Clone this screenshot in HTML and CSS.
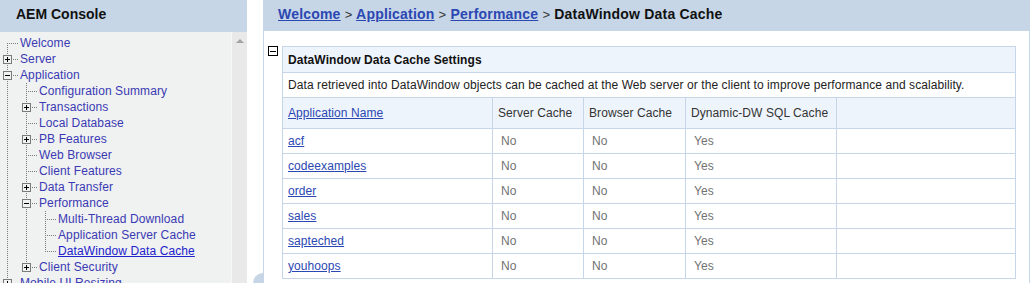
FILE: index.html
```html
<!DOCTYPE html>
<html lang="en">
<head>
    <meta charset="UTF-8">
    <title>AEM Console - DataWindow Data Cache</title>
    <link rel="stylesheet" href="styles.css">
</head>
<body>
    <div class="page">
        <aside class="nav">
            <div class="nav-head">AEM Console</div>
            <div class="nav-body">
                <div class="tree">
                    <div class="row"><span class="t first"></span><a class="lbl" href="#">Welcome</a></div>
                    <div class="row"><span class="t mid"><span class="box plus"></span></span><a class="lbl" href="#">Server</a></div>
                    <div class="row"><span class="t mid"><span class="box"></span></span><a class="lbl" href="#">Application</a></div>
                    <div class="row"><span class="g line"></span><span class="t mid"></span><a class="lbl" href="#">Configuration Summary</a></div>
                    <div class="row"><span class="g line"></span><span class="t mid"><span class="box plus"></span></span><a class="lbl" href="#">Transactions</a></div>
                    <div class="row"><span class="g line"></span><span class="t mid"></span><a class="lbl" href="#">Local Database</a></div>
                    <div class="row"><span class="g line"></span><span class="t mid"><span class="box plus"></span></span><a class="lbl" href="#">PB Features</a></div>
                    <div class="row"><span class="g line"></span><span class="t mid"></span><a class="lbl" href="#">Web Browser</a></div>
                    <div class="row"><span class="g line"></span><span class="t mid"></span><a class="lbl" href="#">Client Features</a></div>
                    <div class="row"><span class="g line"></span><span class="t mid"><span class="box plus"></span></span><a class="lbl" href="#">Data Transfer</a></div>
                    <div class="row"><span class="g line"></span><span class="t mid"><span class="box"></span></span><a class="lbl" href="#">Performance</a></div>
                    <div class="row"><span class="g line"></span><span class="g line"></span><span class="t mid"></span><a class="lbl" href="#">Multi-Thread Download</a></div>
                    <div class="row"><span class="g line"></span><span class="g line"></span><span class="t mid"></span><a class="lbl" href="#">Application Server Cache</a></div>
                    <div class="row"><span class="g line"></span><span class="g line"></span><span class="t last"></span><a class="lbl selected" href="#">DataWindow Data Cache</a></div>
                    <div class="row"><span class="g line"></span><span class="t last"><span class="box plus"></span></span><a class="lbl" href="#">Client Security</a></div>
                    <div class="row"><span class="t mid"><span class="box plus"></span></span><a class="lbl" href="#">Mobile UI Resizing</a></div>
                </div>
                <div class="scroll"><span class="arrow"></span></div>
            </div>
        </aside>

        <div class="split"><span class="grip"></span></div>

        <main class="content">
            <div class="crumbs">
                <a href="#">Welcome</a> <span class="sep">&gt;</span>
                <a href="#">Application</a> <span class="sep">&gt;</span>
                <a href="#">Performance</a> <span class="sep">&gt;</span>
                <span class="current">DataWindow Data Cache</span>
            </div>
            <div class="section">
                <span class="fold"></span>
                <table class="grid">
                    <colgroup>
                        <col class="c1"><col class="c2"><col class="c3"><col class="c4"><col class="c5">
                    </colgroup>
                    <tr class="title"><td colspan="5">DataWindow Data Cache Settings</td></tr>
                    <tr class="desc"><td colspan="5">Data retrieved into DataWindow objects can be cached at the Web server or the client to improve performance and scalability.</td></tr>
                    <tr class="head">
                        <td><a href="#">Application Name</a></td>
                        <td>Server Cache</td>
                        <td>Browser Cache</td>
                        <td>Dynamic-DW SQL Cache</td>
                        <td></td>
                    </tr>
                    <tr><td><a href="#">acf</a></td><td class="v">No</td><td class="v">No</td><td class="v">Yes</td><td></td></tr>
                    <tr><td><a href="#">codeexamples</a></td><td class="v">No</td><td class="v">No</td><td class="v">Yes</td><td></td></tr>
                    <tr><td><a href="#">order</a></td><td class="v">No</td><td class="v">No</td><td class="v">Yes</td><td></td></tr>
                    <tr><td><a href="#">sales</a></td><td class="v">No</td><td class="v">No</td><td class="v">Yes</td><td></td></tr>
                    <tr><td><a href="#">sapteched</a></td><td class="v">No</td><td class="v">No</td><td class="v">Yes</td><td></td></tr>
                    <tr><td><a href="#">youhoops</a></td><td class="v">No</td><td class="v">No</td><td class="v">Yes</td><td></td></tr>
                </table>
            </div>
        </main>
    </div>
</body>
</html>
```

FILE: styles.css
```css
:root {
    --band: #c6d6e7;
    --line: #c6d5e7;
    --pale: #eef4fc;
    --tree-bg: #f0f1f1;
    --dot: #7c7c7c;
    --link: #2b47b2;
    --tree-link: #3a3ab4;
}
body {
    margin: 0;
    background: #fff;
    font-family: "Liberation Sans", Arial, sans-serif;
    font-size: 12px;
    color: #222;
}
.page {
    display: flex;
    height: 283px;
    overflow: hidden;
}

/* left navigation */
.nav {
    width: 247px;
    display: flex;
    flex-direction: column;
    flex-shrink: 0;
}
.nav-head {
    height: 32px;
    line-height: 29px;
    padding-left: 16px;
    background: var(--band);
    font-size: 14px;
    font-weight: bold;
    color: #111;
}
.nav-body {
    flex: 1;
    display: flex;
    min-height: 0;
}
.tree {
    flex: 1;
    background: var(--tree-bg);
    padding-top: 3px;
    overflow: hidden;
    letter-spacing: 0.1px;
}
.row {
    display: flex;
    align-items: center;
    height: 16px;
}
.g, .t {
    width: 19px;
    height: 16px;
    flex-shrink: 0;
    display: flex;
    align-items: center;
}
.g.line {
    background: repeating-linear-gradient(180deg, var(--dot) 0 1px, transparent 1px 2px) 7px 0 / 1px 16px no-repeat;
}
.t {
    background: repeating-linear-gradient(90deg, var(--dot) 0 1px, transparent 1px 2px) 7px 8px / 12px 1px no-repeat;
}
.t.mid {
    background:
        repeating-linear-gradient(90deg, var(--dot) 0 1px, transparent 1px 2px) 7px 8px / 12px 1px no-repeat,
        repeating-linear-gradient(180deg, var(--dot) 0 1px, transparent 1px 2px) 7px 0 / 1px 16px no-repeat;
}
.t.last {
    background:
        repeating-linear-gradient(90deg, var(--dot) 0 1px, transparent 1px 2px) 7px 8px / 12px 1px no-repeat,
        repeating-linear-gradient(180deg, var(--dot) 0 1px, transparent 1px 2px) 7px 0 / 1px 8px no-repeat;
}
.t.first {
    background:
        repeating-linear-gradient(90deg, var(--dot) 0 1px, transparent 1px 2px) 7px 8px / 12px 1px no-repeat,
        repeating-linear-gradient(180deg, var(--dot) 0 1px, transparent 1px 2px) 7px 8px / 1px 8px no-repeat;
}
.box {
    box-sizing: border-box;
    width: 9px;
    height: 9px;
    margin: 1px 0 0 3px;
    border: 1px solid #7a7a7a;
    background: linear-gradient(#000, #000) center / 5px 1px no-repeat, var(--tree-bg);
}
.box.plus {
    background:
        linear-gradient(#000, #000) center / 5px 1px no-repeat,
        linear-gradient(#000, #000) center / 1px 5px no-repeat,
        var(--tree-bg);
}
.lbl {
    margin-left: 1px;
    color: var(--tree-link);
    text-decoration: none;
    white-space: nowrap;
}
.lbl.selected {
    color: #2222cc;
    text-decoration: underline;
}
.scroll {
    width: 15px;
    background: #e9e9e9;
    border-left: 1px solid #f6f6f6;
    display: flex;
    justify-content: center;
}
.arrow {
    width: 0;
    height: 0;
    margin-top: 7px;
    border-left: 4px solid transparent;
    border-right: 4px solid transparent;
    border-bottom: 4px solid #a3a3a3;
}

/* splitter */
.split {
    width: 16px;
    flex-shrink: 0;
    display: flex;
    align-items: flex-end;
}
.grip {
    width: 20px;
    height: 20px;
    margin: 0 0 -10px 6px;
    border-radius: 50%;
    background: var(--band);
    flex-shrink: 0;
}

/* content */
.content {
    width: 767px;
    box-sizing: border-box;
    flex-shrink: 0;
    background: #fff;
    border-left: 1px solid var(--band);
    border-right: 1px solid var(--band);
}
.crumbs {
    height: 31px;
    line-height: 29px;
    padding-left: 14px;
    background: var(--band);
    font-size: 14px;
    font-weight: bold;
    color: #111;
    white-space: nowrap;
    letter-spacing: 0.2px;
}
.crumbs a {
    color: var(--link);
}
.crumbs .sep {
    font-weight: normal;
    font-size: 13px;
    color: #333;
}
.section {
    display: flex;
    align-items: flex-start;
    gap: 4px;
    padding: 15px 0 0 4px;
}
.fold {
    box-sizing: border-box;
    width: 10px;
    height: 10px;
    flex-shrink: 0;
    border: 1px solid #000;
    background: linear-gradient(#000, #000) center / 6px 1px no-repeat, #fff;
}
.grid {
    border-collapse: collapse;
    width: 734px;
    table-layout: fixed;
    border: 1px solid var(--line);
    letter-spacing: 0.08px;
}
.grid td {
    border: 1px solid var(--line);
    padding: 0 5px;
    white-space: nowrap;
    color: #333;
}
.grid .c1 { width: 210px; }
.grid .c2 { width: 91px; }
.grid .c3 { width: 102px; }
.grid .c4 { width: 151px; }
.grid tr { height: 25px; }
.grid tr.title { height: 26px; }
.grid tr.head { height: 31px; }
.grid .title td {
    background: var(--pale);
    font-weight: bold;
    color: #111;
}
.grid .desc td {
    color: #222;
}
.grid .head td {
    background: var(--pale);
}
.grid a {
    color: var(--link);
}
.grid td.v {
    padding-left: 8px;
    color: #727272;
}
```
